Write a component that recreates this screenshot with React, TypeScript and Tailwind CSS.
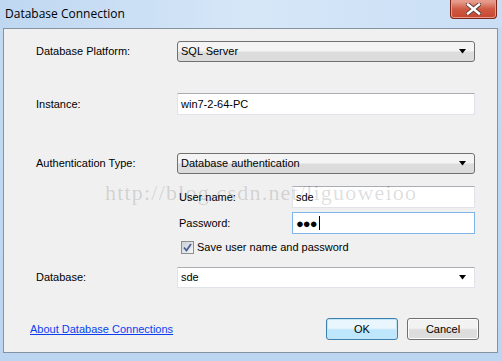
import React from "react";

const ui = { fontFamily: '"Liberation Sans", Arial, sans-serif' };

function Arrow() {
  return (
    <svg width="8" height="5" viewBox="0 0 8 5" className="shrink-0">
      <path d="M0 0 H7 L3.5 4.5 Z" fill="#000" />
    </svg>
  );
}

function DropList({ value }: { value: string }) {
  return (
    <div className="flex h-[21px] w-[298px] items-center justify-between rounded-[3px] border border-[#707070] bg-gradient-to-b from-[#f4f4f4] from-45% to-[#dcdcdc] to-55% pl-[3px] pr-[7px] text-[11px] text-black">
      <span>{value}</span>
      <Arrow />
    </div>
  );
}

function TextBox({
  value,
  width,
  focused,
  children,
}: {
  value?: string;
  width: string;
  focused?: boolean;
  children?: React.ReactNode;
}) {
  return (
    <div
      className={
        "flex h-[22px] items-center bg-white pl-[3px] text-[11px] text-black " +
        width +
        (focused
          ? " border border-[#7eb4ea]"
          : " border border-[#e2e3ea] border-t-[#abadb3]")
      }
    >
      {value}
      {children}
    </div>
  );
}

function Button({ label, primary }: { label: string; primary?: boolean }) {
  return (
    <button
      className={
        "flex h-[22px] w-[72px] items-center justify-center rounded-[3px] border text-[11px] text-black " +
        (primary
          ? "border-[#3c7fb1] bg-gradient-to-b from-[#eaf6fd] from-45% to-[#bee6fd] to-55% shadow-[inset_0_0_0_1px_#c4e5f6]"
          : "border-[#707070] bg-gradient-to-b from-[#f2f2f2] from-45% to-[#dddddd] to-55% shadow-[inset_0_0_0_1px_#fcfcfc]")
      }
    >
      {label}
    </button>
  );
}

export default function App() {
  return (
    <div
      className="relative h-[361px] w-[502px] overflow-hidden bg-gradient-to-b from-[#c4daf2] to-[#bcd5f0]"
      style={ui}
    >
      {/* title bar */}
      <div className="flex h-[28px] items-start justify-between bg-gradient-to-r from-[#bfd7f1] via-[#d6e7f8] to-[#c9def5]">
        <span
          className="pl-[5px] pt-[5px] text-[12px] text-black"
          style={{ fontFamily: '"Open Sans", "Liberation Sans", sans-serif' }}
        >
          Database Connection
        </span>
        <div className="mr-[5px] flex h-[19px] w-[47px] items-center justify-center rounded-b-[4px] border border-t-0 border-[#7a261a] bg-gradient-to-b from-[#e9a99b] via-[#cf5a43] to-[#c8452e] shadow-[inset_0_0_0_1px_#e89b8a]">
          <svg width="15" height="12" viewBox="0 0 15 12">
            <path
              d="M2 1.5 L13 10.5 M13 1.5 L2 10.5"
              stroke="#5a3b36"
              strokeWidth="4.2"
              strokeLinecap="square"
            />
            <path
              d="M2 1.5 L13 10.5 M13 1.5 L2 10.5"
              stroke="#ffffff"
              strokeWidth="2.4"
              strokeLinecap="square"
            />
          </svg>
        </div>
      </div>

      {/* content panel */}
      <div className="ml-[3px] flex h-[325px] w-[495px] flex-col border border-[#8592a2] bg-[#f0f0f0] pl-[32px] text-[11px] text-black">
        <div className="mt-[12px] flex h-[21px] items-center">
          <span className="w-[141px]">Database Platform:</span>
          <DropList value="SQL Server" />
        </div>

        <div className="mt-[31px] flex h-[22px] items-center">
          <span className="w-[141px]">Instance:</span>
          <TextBox value="win7-2-64-PC" width="w-[298px]" />
        </div>

        <div className="mt-[38px] flex h-[21px] items-center">
          <span className="w-[141px]">Authentication Type:</span>
          <DropList value="Database authentication" />
        </div>

        <div className="ml-[143px] mt-[12px] flex h-[22px] items-center">
          <span className="w-[113px]">User name:</span>
          <TextBox value="sde" width="w-[183px]" />
        </div>

        <div className="ml-[143px] mt-[4px] flex h-[22px] items-center">
          <span className="w-[113px]">Password:</span>
          <TextBox width="w-[183px]" focused>
            <span className="text-[13px] leading-none tracking-[-1px]">●●●</span>
            <span className="ml-[2px] h-[14px] w-px bg-black" />
          </TextBox>
        </div>

        <div className="ml-[145px] mt-[7px] flex h-[13px] items-center gap-[3px]">
          <span className="flex h-[13px] w-[13px] items-center justify-center border border-[#8e8f8f] bg-gradient-to-br from-[#cbcfd5] to-[#f6f6f6]">
            <svg width="9" height="9" viewBox="0 0 9 9">
              <path d="M1 4.5 L3.5 7.5 L8 1" fill="none" stroke="#4a5f97" strokeWidth="1.8" />
            </svg>
          </span>
          <span>Save user name and password</span>
        </div>

        <div className="mt-[13px] flex h-[21px] items-center">
          <span className="w-[141px]">Database:</span>
          <div className="flex h-[21px] w-[298px] items-center justify-between border border-[#e2e3ea] border-t-[#abadb3] bg-white pl-[3px] pr-[7px]">
            <span>sde</span>
            <Arrow />
          </div>
        </div>

        <div className="mt-[30px] flex h-[22px] items-center">
          <a href="#" className="-ml-[6px] text-[#0a3ff0] underline">
            About Database Connections
          </a>
          <div className="ml-auto mr-[18px] flex gap-[9px]">
            <Button label="OK" primary />
            <Button label="Cancel" />
          </div>
        </div>
      </div>

      {/* watermark */}
      <div
        className="pointer-events-none absolute left-[105px] top-[176px] text-[22px] tracking-[1.2px] text-black/15"
        style={{ fontFamily: '"Liberation Serif", "Times New Roman", serif' }}
      >
        http://blog.csdn.net/liguoweioo
      </div>
    </div>
  );
}
